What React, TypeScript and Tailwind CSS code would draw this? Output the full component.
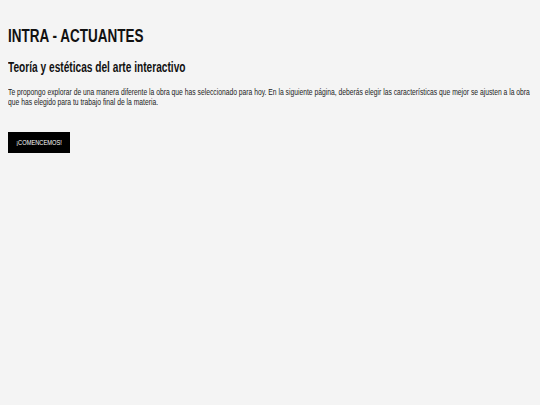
const FONT = '"Liberation Sans", Arial, sans-serif';

export default function App() {
  return (
    <div className="min-h-[405px] w-full bg-[#f4f4f4] px-2 pt-[25px] text-[#111]" style={{ fontFamily: FONT }}>
      {/* Header */}
      <h1 className="origin-left scale-x-[0.71] whitespace-nowrap text-[19px] font-bold leading-[22px]">
        INTRA - ACTUANTES
      </h1>
      <h2 className="mt-[12px] origin-left scale-x-[0.725] whitespace-nowrap text-[14px] font-bold leading-[16px]">
        Teoría y estéticas del arte interactivo
      </h2>

      {/* Intro */}
      <p className="mt-[12px] w-[720px] origin-left scale-x-[0.75] text-[9px] leading-[10px] text-[#222]">
        Te propongo explorar de una manera diferente la obra que has seleccionado para hoy. En la siguiente página,
        deberás elegir las características que mejor se ajusten a la obra
        <br />
        que has elegido para tu trabajo final de la materia.
      </p>

      <button className="mt-[25px] flex h-[21px] w-[62px] items-center justify-center bg-black text-white">
        <span className="scale-x-[0.76] whitespace-nowrap text-[7.5px]">¡COMENCEMOS!</span>
      </button>
    </div>
  );
}
